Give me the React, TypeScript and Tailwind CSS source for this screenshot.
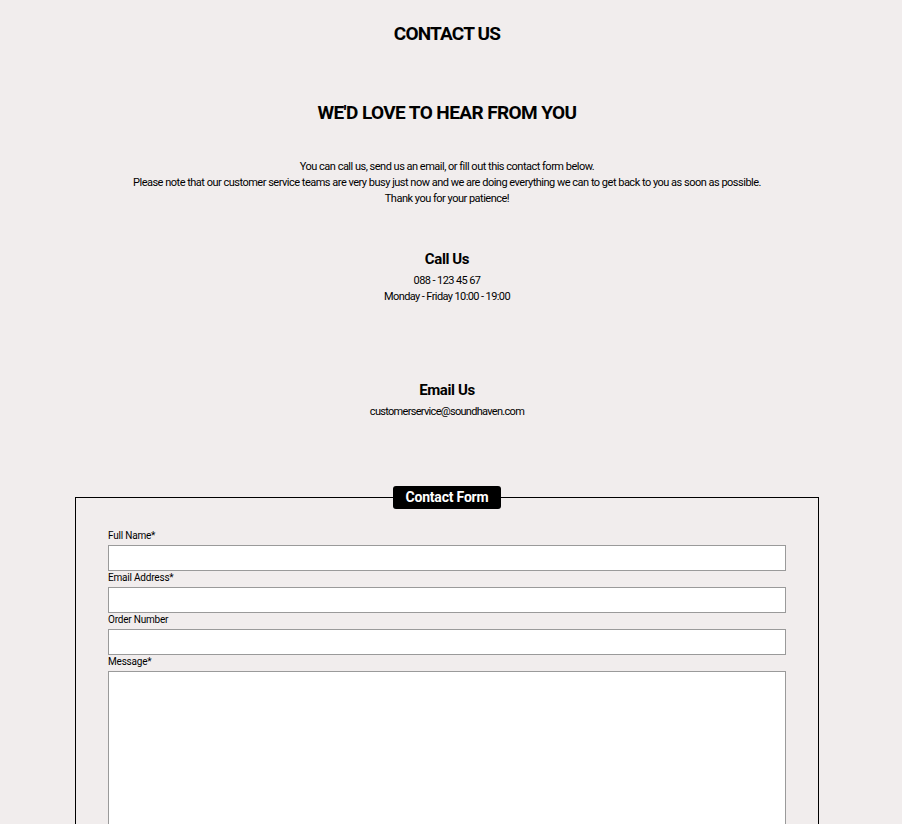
import React from "react";

function ContactPage() {
  const fields = [
    { label: "Full Name*", type: "text" },
    { label: "Email Address*", type: "email" },
    { label: "Order Number", type: "text" },
  ];

  return (
    <div
      className="min-h-[824px] bg-[#f1eded] text-black"
      style={{ fontFamily: "Roboto, sans-serif" }}
    >
      <div className="w-[894px] pt-[22px] pb-10">
        <h1 className="text-center text-[19px] font-bold leading-6 tracking-[-0.8px]">CONTACT US</h1>

        <h2 className="mt-[55px] text-center text-[19px] font-bold leading-6 tracking-[-0.6px]">
          WE'D LOVE TO HEAR FROM YOU
        </h2>

        <div className="mt-[34px] text-center text-[11px] leading-4 tracking-[-0.5px]">
          <p>You can call us, send us an email, or fill out this contact form below.</p>
          <p>Please note that our customer service teams are very busy just now and we are doing everything we can to get back to you as soon as possible.</p>
          <p>Thank you for your patience!</p>
        </div>

        <div className="mt-[42px] text-center">
          <h3 className="text-[15px] font-bold leading-5 tracking-[-0.4px]">Call Us</h3>
          <p className="mt-[4px] text-[11px] leading-4 tracking-[-0.6px]">088 - 123 45 67</p>
          <p className="text-[11px] leading-4 tracking-[-0.6px]">Monday - Friday 10:00 - 19:00</p>
        </div>

        <div className="mt-[75px] text-center">
          <h3 className="text-[15px] font-bold leading-5 tracking-[-0.4px]">Email Us</h3>
          <p className="mt-[4px] text-[11px] leading-4 tracking-[-0.7px]">customerservice@soundhaven.com</p>
        </div>

        <fieldset className="ml-[75px] mt-[66px] w-[744px] border border-black px-[32px] pb-8 pt-[20px]">
          <legend className="mx-auto rounded-[3px] bg-black px-[13px] py-[2px] text-[14px] font-bold leading-[19px] tracking-[-0.2px] text-white">
            Contact Form
          </legend>
          <form className="flex flex-col">
            {fields.map((f) => (
              <label key={f.label} className="flex flex-col">
                <span className="text-[10px] leading-[14px] tracking-[-0.2px]">{f.label}</span>
                <input
                  type={f.type}
                  className="mt-[2px] h-[26px] w-full border border-[#9a9a9a] bg-white px-2 text-sm outline-none"
                />
              </label>
            ))}
            <label className="flex flex-col">
              <span className="text-[10px] leading-[14px] tracking-[-0.2px]">Message*</span>
              <textarea className="mt-[2px] h-[200px] w-full resize-none border border-[#9a9a9a] bg-white px-2 text-sm outline-none" />
            </label>
          </form>
        </fieldset>
      </div>
    </div>
  );
}

export default function App() {
  return <ContactPage />;
}
